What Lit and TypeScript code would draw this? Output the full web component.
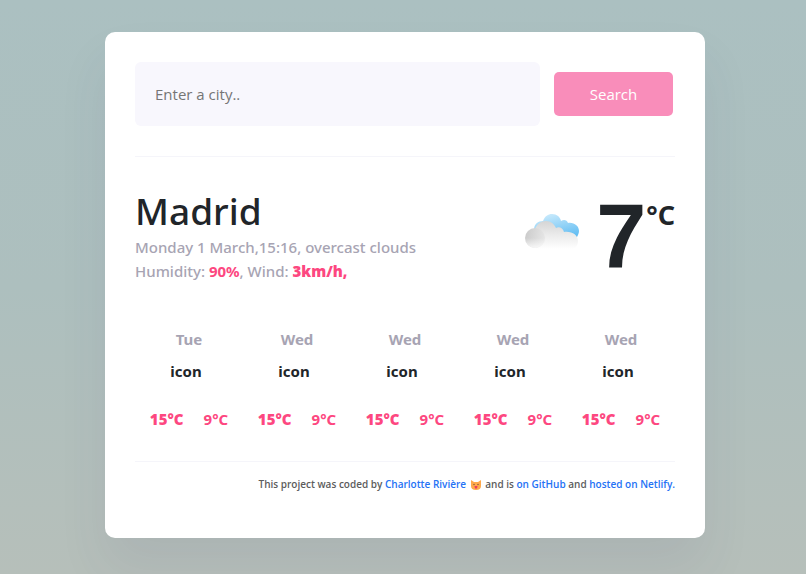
import { LitElement, html, css } from "lit";
import { customElement } from "lit/decorators.js";

interface Forecast {
  day: string;
  high: number;
  low: number;
}

@customElement("weather-cloud")
export class WeatherCloud extends LitElement {
  static styles = css`
    :host { display: block; flex: none; }
    svg { display: block; width: 56px; height: 38px; }
  `;

  render() {
    return html`
      <svg viewBox="0 0 56 38" role="img" aria-label="Overcast clouds">
        <defs>
          <linearGradient id="sky" x1="0.3" y1="0" x2="0.8" y2="1">
            <stop offset="0" stop-color="#c9eafc" />
            <stop offset="1" stop-color="#62bdf2" />
          </linearGradient>
          <linearGradient id="grey" x1="0" y1="0" x2="0" y2="1">
            <stop offset="0" stop-color="#d5d5d5" />
            <stop offset="0.5" stop-color="#ebebeb" />
            <stop offset="1" stop-color="#ffffff" />
          </linearGradient>
          <linearGradient id="puff" x1="0" y1="0.3" x2="1" y2="0.5">
            <stop offset="0" stop-color="#cbcbcb" />
            <stop offset="1" stop-color="#e6e6e6" />
          </linearGradient>
          <linearGradient id="fade" x1="0" y1="0" x2="0" y2="1">
            <stop offset="0.5" stop-color="#ffffff" stop-opacity="0" />
            <stop offset="1" stop-color="#ffffff" stop-opacity="0.8" />
          </linearGradient>
        </defs>
        <path fill="url(#sky)" d="M10 17C10 11 14 8 19 8C21 3 24 1 28 1C33 1 36 4 37 8C40 6 43 7 44 10C50 9 55 13 55 18C55 20 54 22 53 24L20 24Z" />
        <path fill="url(#grey)" d="M11 36V16C13 11 17 8 22 8C27 8 30 11 32 15C35 13 39 15 40 19C48 18 54 22 54 28C54 33 51 36 46 36Z" />
        <circle cx="11" cy="25" r="10" fill="url(#puff)" />
        <circle cx="11" cy="25" r="10" fill="url(#fade)" />
      </svg>
    `;
  }
}

@customElement("cat-face")
export class CatFace extends LitElement {
  static styles = css`
    :host { display: inline-block; margin: 0 2px; vertical-align: -2px; }
    svg { display: block; width: 10px; height: 10px; }
  `;

  render() {
    return html`
      <svg viewBox="0 0 10 10" role="img" aria-label="Cat">
        <path fill="#ffa94a" d="M0 0L3 2H7L10 0V6Q10 10 5 10Q0 10 0 6Z" />
        <circle cx="3" cy="4.5" r="0.7" fill="#79503a" />
        <circle cx="7" cy="4.5" r="0.7" fill="#79503a" />
        <path fill="#e83d5c" d="M3.500 6H6.500L6 8.500H4Z" />
      </svg>
    `;
  }
}

@customElement("app-root")
export class AppRoot extends LitElement {
  static styles = css`
    * { box-sizing: border-box; }
    :host {
      display: block;
      box-sizing: border-box;
      min-height: 100vh;
      padding: 32px 0 36px 4px;
      background: linear-gradient(#abc0c1, #adbfbe 50%, #b6bfba);
      color: #212529;
      font: 500 16px/24px "Noto Sans", "Open Sans", sans-serif;
    }
    .card {
      max-width: 600px;
      margin: 0 auto;
      padding: 30px 30px 42px;
      border-radius: 10px;
      background: #fff;
      box-shadow: 0 30px 50px rgba(65, 50, 100, 0.08);
    }
    .search {
      display: flex;
      align-items: center;
      gap: 14px;
      padding: 0 2px 30px 0;
      border-bottom: 1px solid #f5f5fa;
    }
    input {
      flex: 1;
      min-width: 0;
      height: 64px;
      padding: 0 20px;
      border: 0;
      border-radius: 6px;
      background: #f8f7fd;
      color: #212529;
      font: 400 15px/24px "Open Sans", "Noto Sans", sans-serif;
    }
    input::placeholder { color: #757575; opacity: 1; }
    button {
      width: 119px;
      height: 44px;
      padding: 0;
      border: 0;
      border-radius: 5px;
      background: #f98dba;
      color: #fff;
      font: 400 15px/24px "Open Sans", "Noto Sans", sans-serif;
    }
    .current {
      display: flex;
      justify-content: space-between;
      align-items: flex-start;
      padding-top: 30px;
    }
    h1 { margin: 0; font-size: 37px; font-weight: 500; line-height: 48px; }
    .details { margin: 0; padding: 0; list-style: none; font-size: 15px; color: #a7a4b3; }
    .accent { color: #fd4780; font-weight: 700; }
    .wind { font-weight: 900; }
    .reading { display: flex; align-items: flex-start; padding-top: 10px; }
    weather-cloud { margin: 16px 16px 0 0; }
    .degrees { font: 700 90px/78px "Liberation Sans", Arial, sans-serif; }
    .unit { font-size: 27px; font-weight: 700; line-height: 36px; }
    .forecast {
      display: grid;
      grid-template-columns: repeat(5, 1fr);
      margin: 0;
      padding: 44px 0 30px;
      border-bottom: 1px solid #f5f5fa;
      list-style: none;
      text-align: center;
      font-size: 15px;
      font-weight: 700;
    }
    .day { color: #a7a4b3; }
    .icon { padding: 8px 6px 24px 0; }
    .temps { display: flex; justify-content: center; gap: 20px; color: #fd4780; }
    .high { font-weight: 900; }
    footer {
      padding-top: 10px;
      color: #5c5c5c;
      text-align: right;
      font: 600 10px/24px "Open Sans", "Noto Sans", sans-serif;
    }
    a { color: #2472f5; text-decoration: none; }
  `;

  private forecast: Forecast[] = ["Tue", "Wed", "Wed", "Wed", "Wed"].map(
    (day) => ({ day, high: 15, low: 9 }),
  );

  render() {
    return html`
      <main class="card">
        <form class="search" @submit=${(e: Event) => e.preventDefault()}>
          <input type="text" aria-label="City" placeholder="Enter a city.." />
          <button type="submit">Search</button>
        </form>
        <section class="current">
          <div>
            <h1>Madrid</h1>
            <ul class="details">
              <li>Monday 1 March,15:16, overcast clouds</li>
              <li>Humidity: <span class="accent">90%</span>, Wind: <span class="accent wind">3km/h,</span></li>
            </ul>
          </div>
          <div class="reading">
            <weather-cloud></weather-cloud>
            <span class="degrees">7</span><span class="unit">°C</span>
          </div>
        </section>
        <ul class="forecast">
          ${this.forecast.map(
            (f) => html`
              <li>
                <div class="day">${f.day}</div>
                <div class="icon">icon</div>
                <div class="temps"><span class="high">${f.high}°C</span><span>${f.low}°C</span></div>
              </li>
            `,
          )}
        </ul>
        <footer>
          This project was coded by <a href="#author">Charlotte Rivière</a> <cat-face></cat-face>
          and is <a href="#github">on GitHub</a> and <a href="#netlify">hosted on Netlify.</a>
        </footer>
      </main>
    `;
  }
}
